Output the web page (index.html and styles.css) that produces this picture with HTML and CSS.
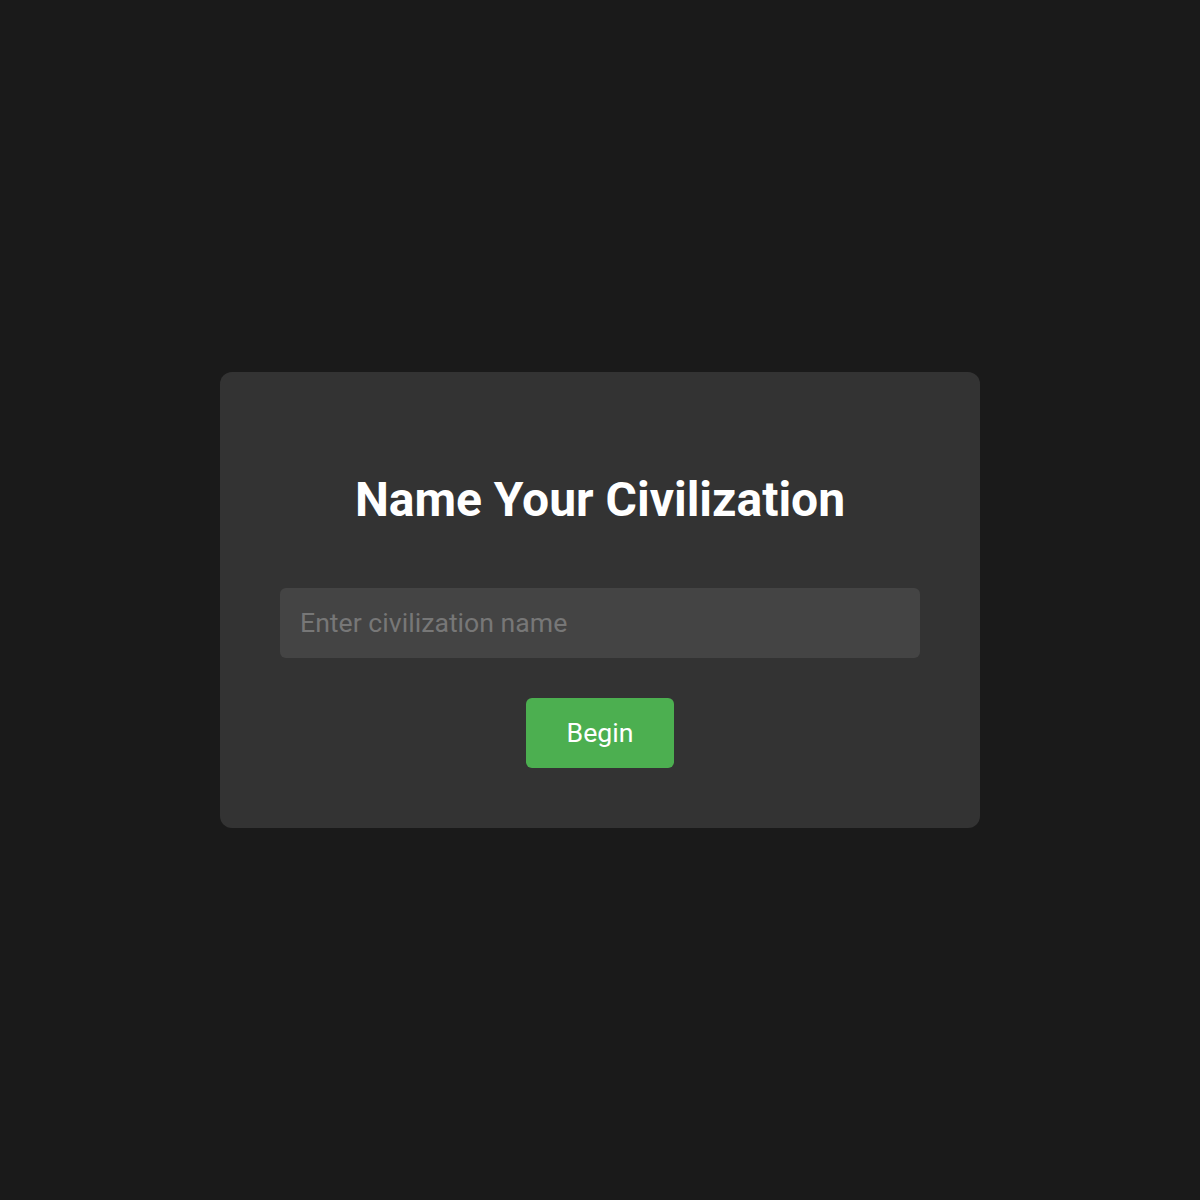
FILE: index.html
```html
<!DOCTYPE html>
<html>
<head>
<meta charset="utf-8">
<link rel="stylesheet" href="styles.css">
</head>
<body>
<div class="screen">
  <div class="card">
    <h1 class="title">Name Your Civilization</h1>
    <input class="name-input" type="text" placeholder="Enter civilization name">
    <button class="begin-btn">Begin</button>
  </div>
</div>
</body>
</html>
```
FILE: styles.css
```css
html, body {
  margin: 0;
  padding: 0;
  background: #1a1a1a;
}
body {
  font-family: Roboto, "Liberation Sans", sans-serif;
}
.screen {
  width: 1200px;
  height: 1200px;
  display: flex;
  align-items: center;
  justify-content: center;
}
.card {
  width: 760px;
  height: 456px;
  box-sizing: border-box;
  background: #333333;
  border-radius: 12px;
  padding: 60px;
  display: flex;
  flex-direction: column;
  align-items: center;
}
.title {
  margin: 40px 0 60px;
  font-size: 48px;
  line-height: 56px;
  font-weight: 700;
  color: #ffffff;
}
.name-input {
  width: 640px;
  height: 70px;
  box-sizing: border-box;
  border: none;
  outline: none;
  border-radius: 6px;
  background: #444444;
  padding: 0 20px;
  font-family: Roboto, "Liberation Sans", sans-serif;
  font-size: 26.67px;
  color: #ffffff;
  margin: 0 0 40px;
}
.name-input::placeholder {
  color: #777777;
}
.begin-btn {
  width: 148px;
  height: 70px;
  border: none;
  border-radius: 6px;
  background: #4caf50;
  color: #ffffff;
  font-family: Roboto, "Liberation Sans", sans-serif;
  font-size: 26.67px;
  padding: 0;
}
```
